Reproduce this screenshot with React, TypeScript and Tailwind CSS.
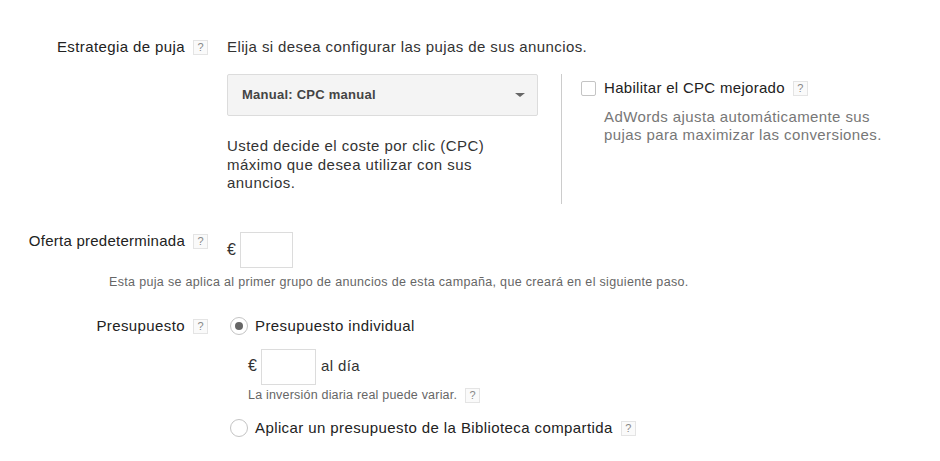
function Help({ className = "" }: { className?: string }) {
  return (
    <span className={`inline-flex h-[15px] w-[15px] shrink-0 items-center justify-center border border-[#e4e4e4] bg-[#fafafa] text-[11px] leading-none tracking-normal text-[#888] ${className}`}>
      ?
    </span>
  )
}

function Label({ text, tracking = "" }: { text: string; tracking?: string }) {
  return (
    <div className="flex w-[227px] shrink-0 items-center justify-end pr-[19px]">
      <span className={`mr-2 text-[#222] ${tracking}`}>{text}</span>
      <Help />
    </div>
  )
}

function Amount({ width }: { width: string }) {
  return <div className={`h-[36px] border border-[#dcdcdc] bg-white ${width}`} />
}

export default function App() {
  return (
    <div className="h-[461px] w-[940px] overflow-hidden bg-white pt-[38px] font-['Liberation_Sans',Arial,sans-serif] text-[15px] leading-[18px] tracking-[0.4px] text-[#333]">
      {/* estrategia */}
      <div className="flex">
        <div className="self-start">
          <Label text="Estrategia de puja" />
        </div>
        <div>
          <div>Elija si desea configurar las pujas de sus anuncios.</div>
          <div className="mt-[18px] flex">
            <div className="w-[334px]">
              <div className="flex h-[42px] w-[311px] items-center justify-between rounded-[2px] border border-[#dcdcdc] bg-[#f4f4f4] pl-[14px] pr-[12px] text-[13px] font-bold tracking-[0.25px] text-[#444]">
                <span>Manual: CPC manual</span>
                <span className="h-0 w-0 border-x-[5px] border-t-[4px] border-x-transparent border-t-[#666]" />
              </div>
              <p className="mt-[21px] w-[290px] leading-[18.5px] tracking-[0.45px]">
                Usted decide el coste por clic (CPC) máximo que desea utilizar con sus anuncios.
              </p>
            </div>
            <div className="h-[130px] border-l border-[#ccc] pl-[19px] pt-[5px]">
              <div className="flex items-center">
                <span className="h-[15px] w-[15px] rounded-[2px] border border-[#c4c4c4] bg-white" />
                <span className="ml-[8px] tracking-[0.3px] text-[#222]">Habilitar el CPC mejorado</span>
                <Help className="ml-2" />
              </div>
              <p className="ml-[23px] mt-[11px] w-[290px] text-[#777]">
                AdWords ajusta automáticamente sus pujas para maximizar las conversiones.
              </p>
            </div>
          </div>
        </div>
      </div>

      {/* oferta */}
      <div className="mt-[28px] flex">
        <div className="self-start">
          <Label text="Oferta predeterminada" tracking="tracking-[0.25px]" />
        </div>
        <div className="flex items-center">
          <span className="mr-[4px] text-[16px] tracking-normal">€</span>
          <Amount width="w-[53px]" />
        </div>
      </div>
      <p className="ml-[109px] mt-[6px] text-[12.5px] leading-[16px] tracking-[0.33px] text-[#666]">
        Esta puja se aplica al primer grupo de anuncios de esta campaña, que creará en el siguiente paso.
      </p>

      {/* presupuesto */}
      <div className="mt-[27px] flex">
        <Label text="Presupuesto" />
        <div className="ml-[3px] flex items-center">
          <span className="flex h-[18px] w-[18px] items-center justify-center rounded-full border border-[#c4c4c4] bg-white">
            <span className="h-[8px] w-[8px] rounded-full bg-[#666]" />
          </span>
          <span className="ml-[7px] text-[#222]">Presupuesto individual</span>
        </div>
      </div>
      <div className="ml-[248px] mt-[14px] flex items-center">
        <span className="mb-[2px] mr-[4px] text-[16px] tracking-normal">€</span>
        <Amount width="w-[55px]" />
        <span className="ml-[5px] mb-[2px]">al día</span>
      </div>
      <div className="ml-[248px] mt-[2px] flex items-center text-[12.5px] leading-[16px] tracking-[0.2px] text-[#666]">
        <span>La inversión diaria real puede variar.</span>
        <Help className="ml-2" />
      </div>
      <div className="ml-[230px] mt-[16px] flex items-center">
        <span className="h-[18px] w-[18px] rounded-full border border-[#c4c4c4] bg-white" />
        <span className="ml-[7px] text-[#222]">Aplicar un presupuesto de la Biblioteca compartida</span>
        <Help className="ml-2" />
      </div>
    </div>
  )
}
